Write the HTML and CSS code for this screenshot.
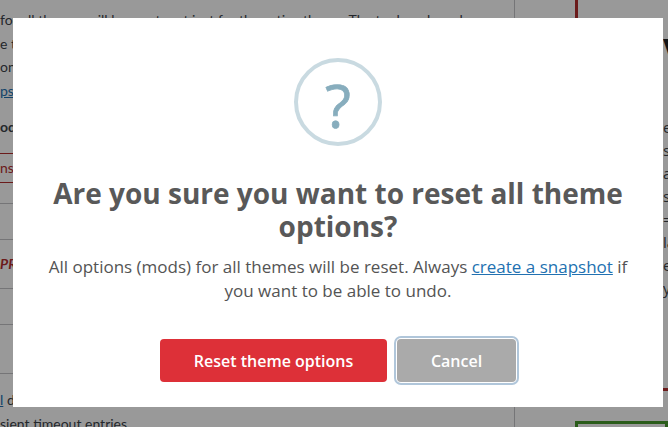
FILE: index.html
```html
<!DOCTYPE html>
<html lang="en">
<head>
    <meta charset="UTF-8">
    <title>Reset theme options</title>
    <link rel="stylesheet" href="styles.css">
</head>
<body>

    <!-- Settings page behind the dialog -->
    <div class="page">
        <div class="main">
            <p class="intro">for all themes will be reset; not just for the active theme. The tool works only</p>
            <p class="intro">e th</p>
            <p class="intro">on</p>
            <p class="intro"><a href="#">ps</a></p>
            <div class="row-title">odi</div>
            <div class="row-alert">ns</div>
            <div class="row row-s"></div>
            <div class="row row-m"></div>
            <div class="row row-l"><b class="pro">PR</b></div>
            <div class="row row-m"></div>
            <div class="row row-l"></div>
            <p class="intro note"><a href="#">l</a> d</p>
            <p class="intro">sient timeout entries.</p>
        </div>
        <div class="side">
            <div class="notice">
                <div class="notice-letter">V</div>
                <div class="notice-text">
                    <span>es</span>
                    <span>s</span>
                    <span>a</span>
                    <span>s</span>
                    <span>=</span>
                    <span>la</span>
                    <span>es</span>
                    <span>y</span>
                </div>
            </div>
            <div class="side-green"></div>
        </div>
    </div>

    <!-- Confirm dialog -->
    <div class="overlay">
        <div class="modal">
            <div class="icon">?</div>
            <h2>Are you sure you want to reset all theme options?</h2>
            <p class="message">All options (mods) for all themes will be reset. Always <a href="#">create a snapshot</a> if you want to be able to undo.</p>
            <div class="actions">
                <button class="btn btn-reset">Reset theme options</button>
                <button class="btn btn-cancel">Cancel</button>
            </div>
        </div>
    </div>

</body>
</html>
```

FILE: styles.css
```css
/* Page behind */
html, body {
    height: 100%;
}
body {
    margin: 0;
    overflow: hidden;
    font-family: "Open Sans", Arial, sans-serif;
    color: #3c434a;
    background: #ffffff;
}
a {
    color: #2271b1;
}

.page {
    display: flex;
    height: 427px;
    overflow: hidden;
}
.main {
    flex: 0 0 515px;
    box-sizing: border-box;
    border-right: 1px solid #c3c4c7;
    overflow: hidden;
    white-space: nowrap;
    font-family: Lato, Arial, sans-serif;
    font-size: 14px;
}
.intro {
    margin: 0;
    line-height: 23.5px;
}
.intro:first-child {
    margin-top: 8px;
}
.row-title {
    margin-top: 14px;
    padding-bottom: 15px;
    font-weight: 700;
    line-height: 22px;
}
.row-alert {
    box-sizing: border-box;
    height: 30px;
    border-top: 1px solid #b32d2e;
    border-bottom: 1px solid #b32d2e;
    color: #b32d2e;
    line-height: 28px;
}
.row {
    box-sizing: border-box;
    border-bottom: 1px solid #c3c4c7;
}
.row-s {
    height: 21px;
}
.row-m {
    height: 36px;
}
.row-l {
    height: 49px;
    line-height: 48px;
}
.pro {
    font-style: italic;
    color: #b32d2e;
}
.note {
    margin-top: 14px;
}

.side {
    flex: 1;
    min-width: 0;
    padding-left: 60px;
    overflow: hidden;
    white-space: nowrap;
}
.notice {
    box-sizing: border-box;
    height: 391px;
    padding: 32px 0 0 85px;
    border-left: 3px solid #b32d2e;
    border-bottom: 3px solid #b32d2e;
}
.notice-letter {
    font-size: 40px;
    font-weight: 700;
    line-height: 40px;
    color: #1d2327;
}
.notice-text {
    display: flex;
    flex-direction: column;
    margin-top: 44px;
    font-size: 15px;
    line-height: 23px;
}
.side-green {
    height: 60px;
    margin-top: 30px;
    border: 3px solid #469a2c;
}

/* Dialog */
.overlay {
    position: fixed;
    inset: 0;
    box-sizing: border-box;
    padding: 18px 5px 20px 13px;
    background: rgba(0, 0, 0, 0.4);
}
.modal {
    box-sizing: border-box;
    height: 389px;
    padding-top: 40px;
    background: #ffffff;
    text-align: center;
}
.icon {
    box-sizing: border-box;
    width: 88px;
    height: 88px;
    margin: 0 auto;
    border: 4px solid #c9dae1;
    border-radius: 50%;
    color: #87adbd;
    font-size: 60px;
    -webkit-text-stroke: 0.7px #87adbd;
    line-height: 86px;
}
h2 {
    margin: 31px 30px 0;
    color: #595959;
    font-size: 28px;
    font-weight: 700;
    line-height: 33px;
}
.message {
    margin: 12px 30px 0;
    color: #545454;
    font-size: 17px;
    line-height: 24px;
}
.actions {
    display: flex;
    justify-content: center;
    gap: 10px;
    margin-top: 36px;
}
.btn {
    height: 43px;
    padding: 1px 0 0;
    border: 0;
    border-radius: 4px;
    color: #ffffff;
    font-family: inherit;
    font-size: 16px;
    font-weight: 600;
    cursor: pointer;
}
.btn-reset {
    width: 227px;
    background: #dd3038;
}
.btn-cancel {
    width: 119px;
    background: #aaaaaa;
    box-shadow: 0 0 0 1px #ffffff, 0 0 0 3px #b0c6da;
}
```
